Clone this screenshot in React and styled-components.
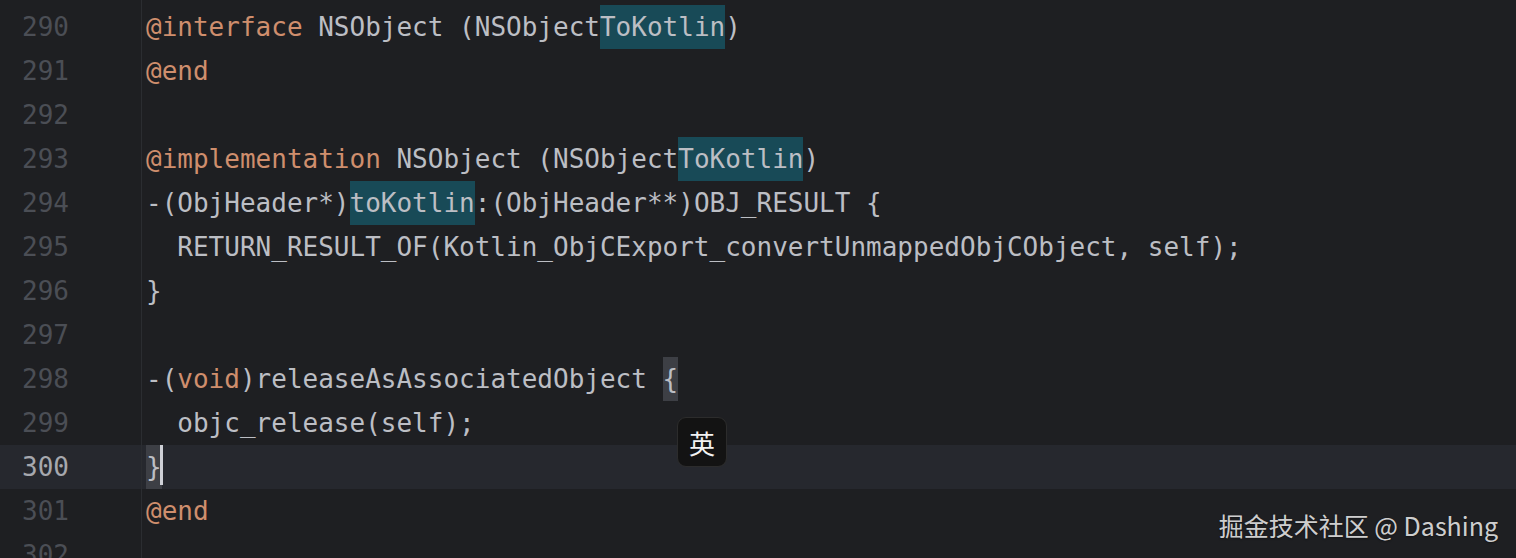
import styled, { createGlobalStyle } from "styled-components";

const lines = [
  {
    n: 290,
    tokens: [
      { k: "kw", t: "@interface" },
      { t: " NSObject (NSObject" },
      { k: "hl", t: "ToKotlin" },
      { t: ")" },
    ],
  },
  { n: 291, tokens: [{ k: "kw", t: "@end" }] },
  { n: 292, tokens: [] },
  {
    n: 293,
    tokens: [
      { k: "kw", t: "@implementation" },
      { t: " NSObject (NSObject" },
      { k: "hl", t: "ToKotlin" },
      { t: ")" },
    ],
  },
  {
    n: 294,
    tokens: [
      { t: "-(ObjHeader*)" },
      { k: "hl", t: "toKotlin" },
      { t: ":(ObjHeader**)OBJ_RESULT {" },
    ],
  },
  {
    n: 295,
    tokens: [
      { t: "  RETURN_RESULT_OF(Kotlin_ObjCExport_convertUnmappedObjCObject, self);" },
    ],
  },
  { n: 296, tokens: [{ t: "}" }] },
  { n: 297, tokens: [] },
  {
    n: 298,
    tokens: [
      { t: "-(" },
      { k: "kw", t: "void" },
      { t: ")releaseAsAssociatedObject " },
      { k: "brace", t: "{" },
    ],
  },
  { n: 299, tokens: [{ t: "  objc_release(self);" }] },
  { n: 300, current: true, tokens: [{ k: "brace", t: "}" }, { k: "caret" }] },
  { n: 301, tokens: [{ k: "kw", t: "@end" }] },
  { n: 302, tokens: [] },
];

export default function App() {
  return (
    <>
      <GlobalStyle />
      <Screen>
        <Editor>
          {/* scrolled a few pixels: top strip of the previous line */}
          <Row $h={5}>
            <Gutter />
          </Row>
          {lines.map((line) => (
            <Row key={line.n} $current={line.current}>
              <Gutter>
                <LineNumber $current={line.current}>{line.n}</LineNumber>
              </Gutter>
              <Code>
                {line.tokens.map((tok, i) =>
                  tok.k === "caret" ? (
                    <Caret key={i} />
                  ) : (
                    <Token key={i} $kind={tok.k}>
                      {tok.t}
                    </Token>
                  )
                )}
              </Code>
            </Row>
          ))}
        </Editor>
        <ImeBadge>英</ImeBadge>
        <Watermark>掘金技术社区 @ Dashing</Watermark>
      </Screen>
    </>
  );
}

const GlobalStyle = createGlobalStyle`
  html, body {
    margin: 0;
    padding: 0;
    background: #1e1f22;
    overflow: hidden;
  }
`;

const Screen = styled.div`
  position: relative;
  width: 1516px;
  height: 558px;
  overflow: hidden;
  background: #1e1f22;
`;

const Editor = styled.div`
  display: flex;
  flex-direction: column;
  font-family: "DejaVu Sans Mono", "Liberation Mono", monospace;
  font-size: 26px;
  line-height: 44px;
`;

const Row = styled.div`
  display: flex;
  flex: 0 0 auto;
  height: ${(p) => p.$h ?? 44}px;
  background: ${(p) => (p.$current ? "#26282e" : "transparent")};
`;

const Gutter = styled.div`
  flex: 0 0 141px;
  display: grid;
  grid-template-columns: 69px 1fr;
  border-right: 1px solid #2b2d31;
`;

const LineNumber = styled.span`
  text-align: right;
  color: ${(p) => (p.$current ? "#a6a8ae" : "#4b4e55")};
`;

const Code = styled.div`
  padding-left: 4px;
  white-space: pre;
  color: #bcbec4;
  display: flex;
  align-items: stretch;
`;

const kindStyles = {
  kw: "color: #cf8e6d;",
  hl: "background: #184a57;",
  brace: "background: #3d3f45;",
};

const Token = styled.span`
  display: inline-block;
  height: 44px;
  ${(p) => kindStyles[p.$kind] || ""}
`;

const Caret = styled.span`
  display: inline-block;
  width: 3px;
  height: 40px;
  margin-left: -2px;
  align-self: flex-start;
  background: #ced0d6;
`;

const ImeBadge = styled.div`
  position: absolute;
  left: 677px;
  top: 417px;
  width: 50px;
  height: 50px;
  box-sizing: border-box;
  display: flex;
  align-items: center;
  justify-content: center;
  border-radius: 9px;
  background: #131313;
  border: 1px solid #2c2c2c;
  color: #f2f2f2;
  font-family: "Noto Sans CJK SC", sans-serif;
  font-size: 26px;
`;

const Watermark = styled.div`
  position: absolute;
  right: 18px;
  bottom: 15px;
  color: rgba(232, 232, 232, 0.9);
  font-family: "Noto Sans CJK SC", "Noto Sans", sans-serif;
  font-size: 25px;
  line-height: 36px;
  text-shadow: 0 1px 2px rgba(0, 0, 0, 0.4);
`;
